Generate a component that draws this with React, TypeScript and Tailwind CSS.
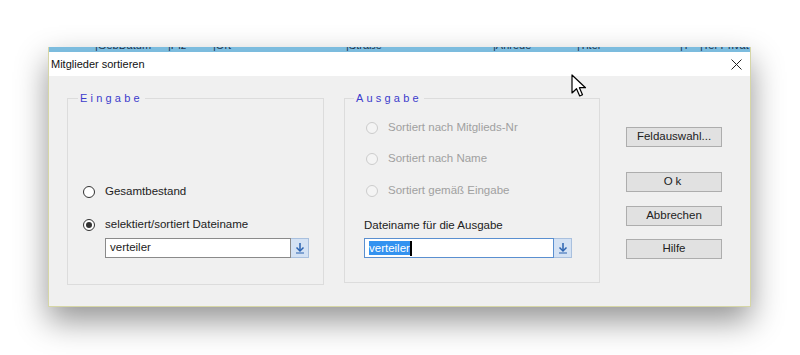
import React from "react";

const sans = "font-['Liberation_Sans',Arial,sans-serif]";

function Radio({ checked = false, disabled = false }: { checked?: boolean; disabled?: boolean }) {
  return (
    <span
      className={
        "flex h-[12px] w-[12px] shrink-0 items-center justify-center rounded-full border " +
        (disabled ? "border-[#cccccc] bg-[#f4f4f4]" : "border-[#333333] bg-white")
      }
    >
      {checked && <span className="h-[6px] w-[6px] rounded-full bg-[#333333]" />}
    </span>
  );
}

function RadioRow({ label, checked, disabled }: { label: string; checked?: boolean; disabled?: boolean }) {
  return (
    <div className="flex h-[16px] items-center gap-[10px]">
      <Radio checked={checked} disabled={disabled} />
      <span className={disabled ? "text-[#a0a0a0]" : "text-[#222222]"}>{label}</span>
    </div>
  );
}

function DropArrow() {
  return (
    <svg width="10" height="12" viewBox="0 0 10 12">
      <path d="M5 1v7" stroke="#2a62b0" strokeWidth="1.5" />
      <path d="M1.5 5.5 5 9l3.5-3.5" stroke="#2a62b0" strokeWidth="1.5" fill="none" />
      <path d="M1 11h8" stroke="#2a62b0" strokeWidth="1" />
    </svg>
  );
}

function FileInput({ width, selected }: { width: string; selected?: boolean }) {
  return (
    <div className={"flex h-[20px] " + width}>
      <div
        className={
          "flex flex-1 items-center border bg-white pl-[4px] " +
          (selected ? "border-[#5a8fd0]" : "border-[#8a8a8a]")
        }
      >
        {selected ? (
          <>
            <span className="bg-[#3392f0] leading-[14px] text-white">verteiler</span>
            <span className="h-[15px] w-[2px] bg-black" />
          </>
        ) : (
          <span className="text-[#222222]">verteiler</span>
        )}
      </div>
      <div className="flex w-[18px] items-center justify-center border border-l-0 border-[#a9c0de] bg-[#d4e2f4]">
        <DropArrow />
      </div>
    </div>
  );
}

function Btn({ label, wide }: { label: string; wide?: boolean }) {
  return (
    <button
      className={
        "flex h-[20px] w-[96px] items-center justify-center border border-[#adadad] bg-[#e1e1e1] text-[#222222] " +
        (wide ? "tracking-[3px]" : "")
      }
    >
      {label}
    </button>
  );
}

function Legend({ text, shift }: { text: string; shift: string }) {
  return (
    <legend className={"px-[2px] text-[11px] leading-[14px] tracking-[3.2px] text-[#3c3ccc] " + shift}>
      {text}
    </legend>
  );
}

function Cursor() {
  return (
    <svg className="absolute left-[571px] top-[74px]" width="16" height="24" viewBox="0 0 16 24">
      <path
        d="M1 1v18l4.5-4.3 3.2 7.3 2.8-1.2-3.1-7.1H14.5z"
        fill="white"
        stroke="black"
        strokeWidth="1.2"
        strokeLinejoin="round"
      />
    </svg>
  );
}

export default function App() {
  return (
    <div className={"relative h-[355px] w-[800px] overflow-hidden bg-white pl-[48px] pt-[47px] text-[11.5px] " + sans}>
      <div className="w-[703px] border-x border-b border-[#d6d6a6] shadow-[0_14px_30px_rgba(0,0,0,0.42)]">
        {/* table header of the window behind */}
        <div className="h-[5px] overflow-hidden bg-[#7cbcde]">
          <div className="-mt-[7px] flex pl-[46px] text-[11px] leading-[11px] text-[#1c3550]">
            <span className="w-[73px]">|GebDatum</span>
            <span className="w-[45px]">|Plz</span>
            <span className="w-[133px]">|Ort</span>
            <span className="w-[147px]">|Straße</span>
            <span className="w-[84px]">|Anrede</span>
            <span className="w-[103px]">|Titel</span>
            <span className="w-[20px]">|T</span>
            <span>|Tel-Privat</span>
          </div>
        </div>

        {/* title bar */}
        <div className="flex h-[24px] items-center justify-between bg-white pl-[2px] pr-[8px]">
          <span className="text-[11px] text-[#111111]">Mitglieder sortieren</span>
          <svg width="11" height="11" viewBox="0 0 11 11">
            <path d="M0.5 0.5l10 10M10.5 0.5l-10 10" stroke="#222" strokeWidth="1" />
          </svg>
        </div>

        {/* body */}
        <div className="flex h-[230px] bg-[#f0f0f0] pl-[18px] pt-[15px]">
          <fieldset className="flex h-[194px] w-[257px] flex-col justify-end border border-[#dcdcdc] pb-[26px] pl-[15px]">
            <Legend text="Eingabe" shift="-ml-[5px]" />
            <RadioRow label="Gesamtbestand" />
            <div className="mt-[17px]">
              <RadioRow label="selektiert/sortiert Dateiname" checked />
            </div>
            <div className="ml-[22px] mt-[5px]">
              <FileInput width="w-[204px]" />
            </div>
          </fieldset>

          <fieldset className="ml-[20px] flex h-[192px] w-[256px] flex-col border border-[#dcdcdc] pl-[19px] pt-[15px]">
            <Legend text="Ausgabe" shift="-ml-[10px]" />
            <div className="ml-[2px] flex flex-col">
              <RadioRow label="Sortiert nach Mitglieds-Nr" disabled />
              <div className="mt-[15px]">
                <RadioRow label="Sortiert nach Name" disabled />
              </div>
              <div className="mt-[16px]">
                <RadioRow label="Sortiert gemäß Eingabe" disabled />
              </div>
            </div>
            <div className="mt-[18px] leading-[16px] text-[#222222]">Dateiname für die Ausgabe</div>
            <div className="mt-[5px]">
              <FileInput width="w-[208px]" selected />
            </div>
          </fieldset>

          <div className="ml-[26px] flex flex-col pt-[36px]">
            <Btn label="Feldauswahl..." />
            <div className="mt-[25px]">
              <Btn label="Ok" wide />
            </div>
            <div className="mt-[14px]">
              <Btn label="Abbrechen" />
            </div>
            <div className="mt-[13px]">
              <Btn label="Hilfe" />
            </div>
          </div>
        </div>
      </div>
      <Cursor />
    </div>
  );
}
